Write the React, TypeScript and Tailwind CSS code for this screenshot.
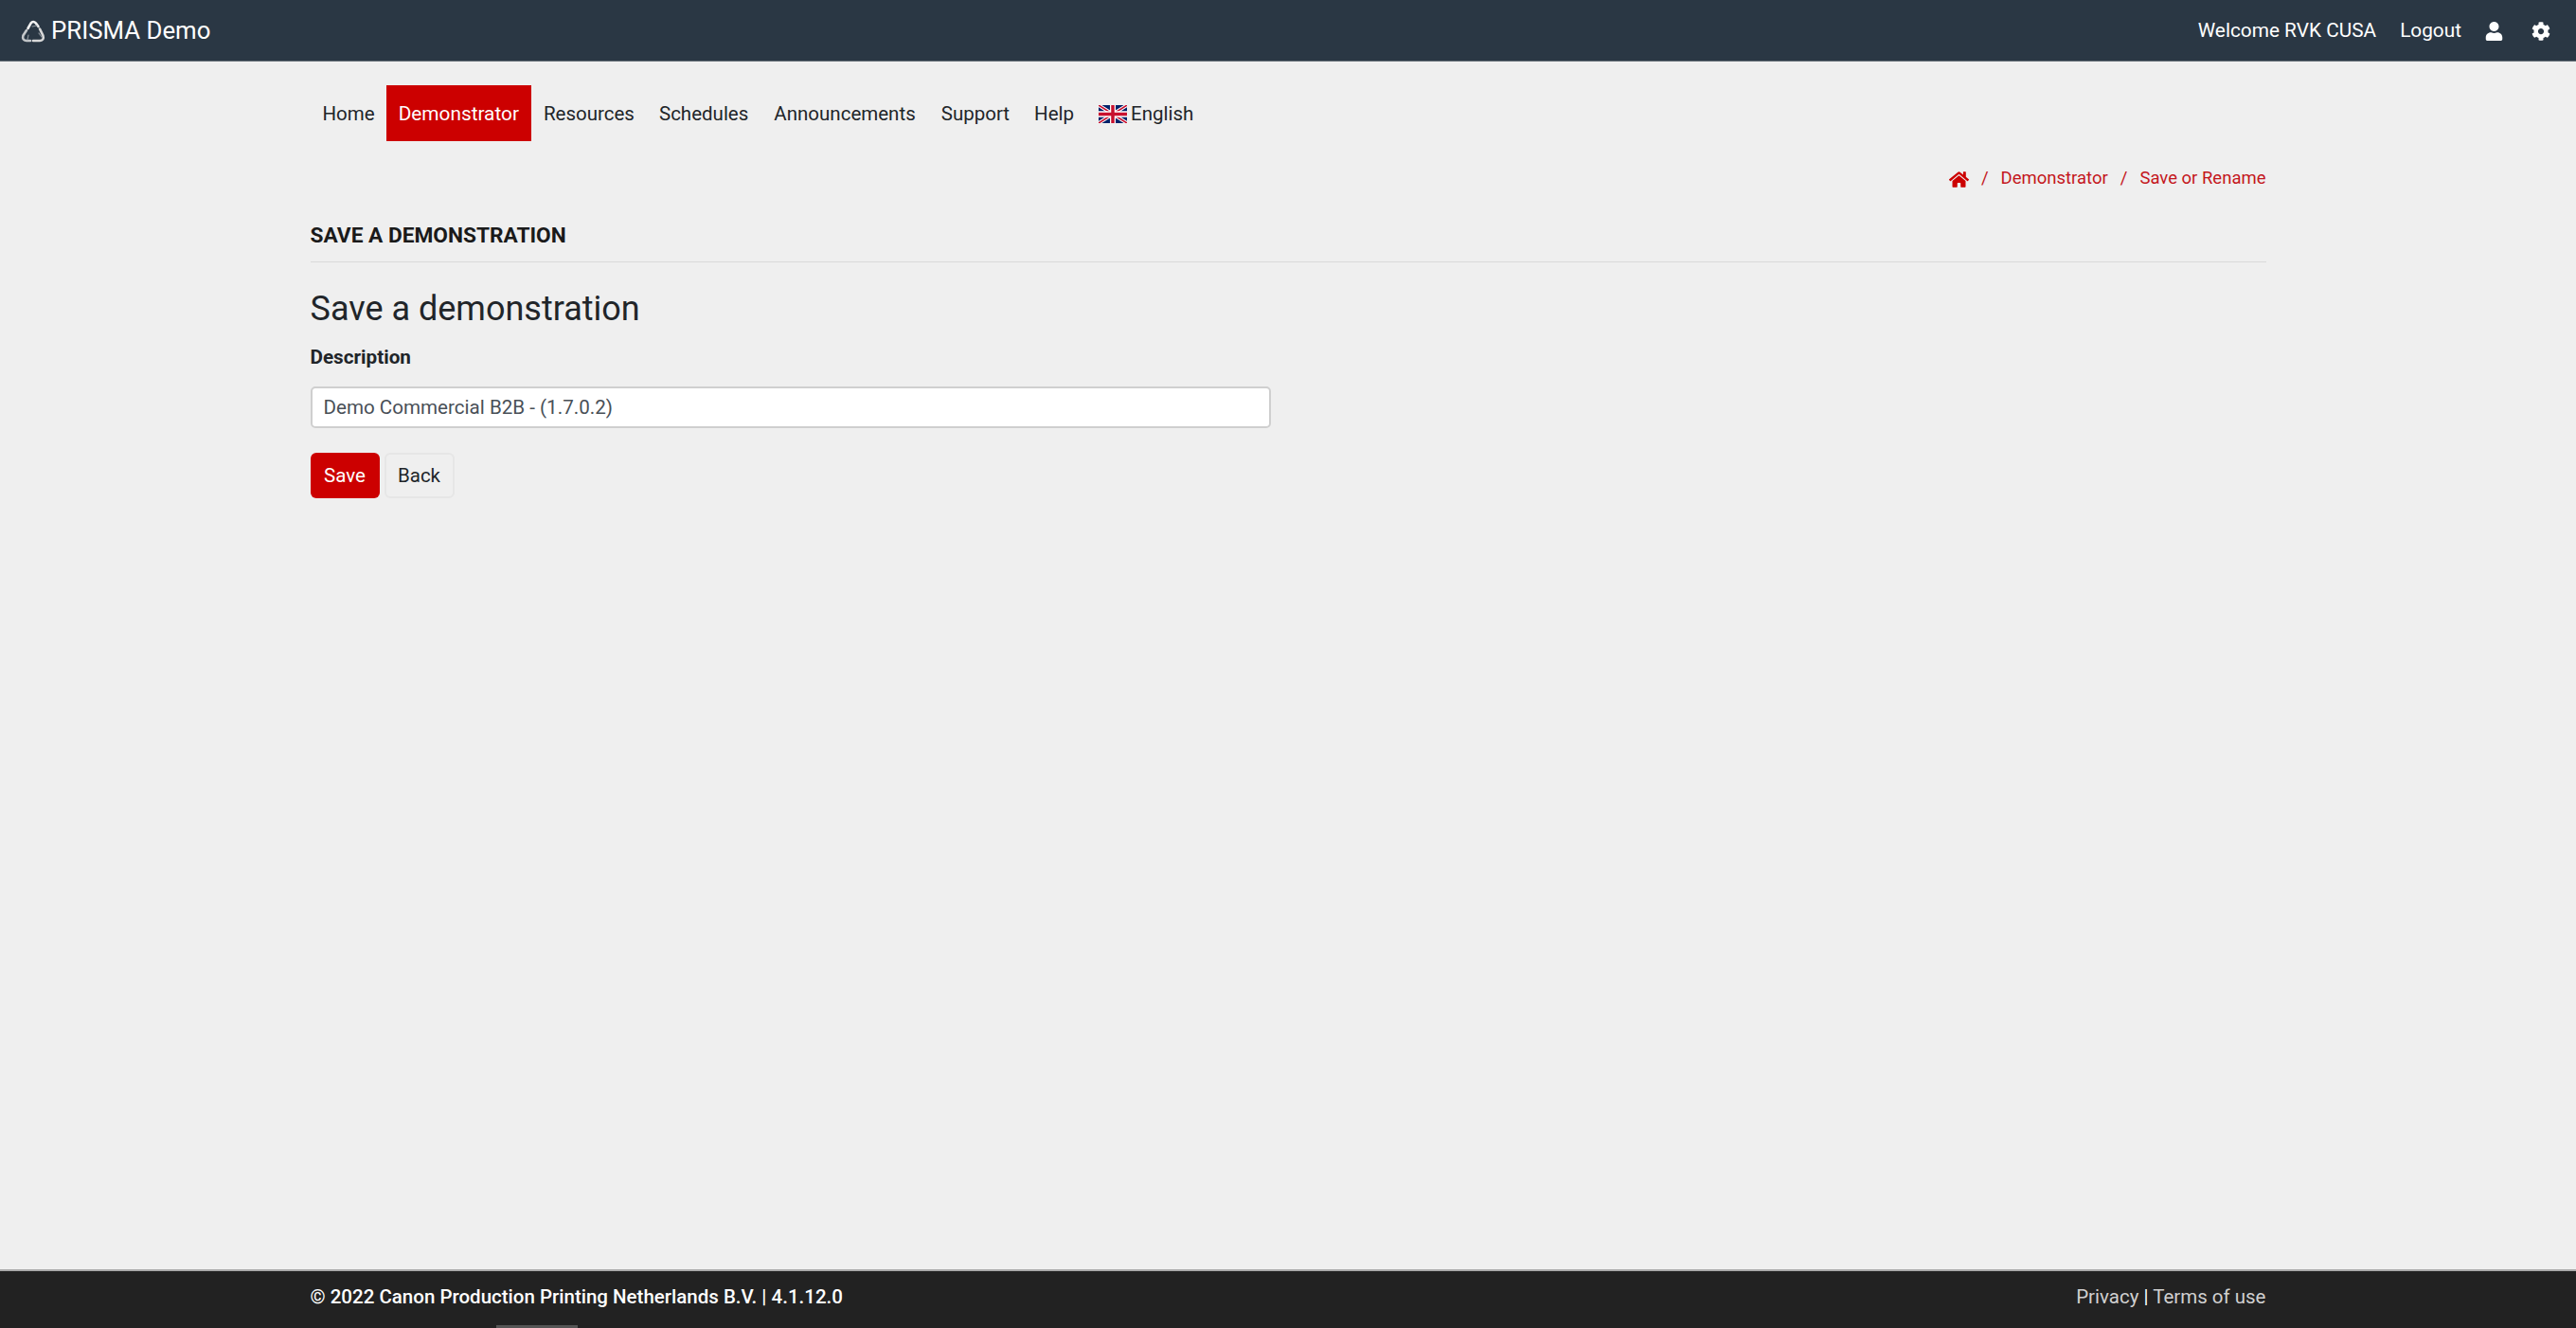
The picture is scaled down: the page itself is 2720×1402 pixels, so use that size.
import { FaHome, FaUser, FaCog } from "react-icons/fa";

function Logo() {
  return (
    <svg viewBox="0 0 26 26" className="w-[26px] h-[26px] mr-[6px]" fill="none" strokeLinecap="round">
      <path d="M7.5 10 L10.5 4.6 Q13 1.4 15.8 4.4 L18.5 8" stroke="#f2f2f2" strokeWidth="2.6" />
      <path d="M20 10.5 L23.4 17.5 Q25 22.5 20 23 L13 23" stroke="#d8d8d8" strokeWidth="2.6" />
      <path d="M10 23 L6 23 Q1 22.5 2.4 17.6 L6 12" stroke="#c4c7ca" strokeWidth="2.6" />
      <path d="M17 7 L12 8 M22 19 L19 15 M7 22 L8 17" stroke="#8d959c" strokeWidth="1.2" />
    </svg>
  );
}

function Flag() {
  return (
    <svg viewBox="0 0 60 36" className="w-[30px] h-[19px] mr-[4px]" preserveAspectRatio="none">
      <rect width="60" height="36" fill="#012169" />
      <path d="M0 0 L60 36 M60 0 L0 36" stroke="#fff" strokeWidth="7" />
      <path d="M0 0 L60 36 M60 0 L0 36" stroke="#C8102E" strokeWidth="3" />
      <path d="M30 0 V36 M0 18 H60" stroke="#fff" strokeWidth="12" />
      <path d="M30 0 V36 M0 18 H60" stroke="#C8102E" strokeWidth="7" />
    </svg>
  );
}

export default function App() {
  return (
    <div className="relative min-h-screen flex flex-col bg-[#efefef] font-['Roboto',sans-serif] text-[20.5px] text-[#212529]">
      <header className="h-[65px] bg-[#2a3744] border-b border-[#6c757d] flex items-center justify-between pt-[1px] pl-[22px] pr-[27px] text-white">
        <div className="flex items-center text-[25.8px]">
          <Logo />
          <span>PRISMA Demo</span>
        </div>
        <div className="flex items-center text-[20.8px]">
          <span>Welcome RVK CUSA</span>
          <span className="ml-[25px]">Logout</span>
          <FaUser className="ml-[24px] w-[21px] h-[20px]" />
          <FaCog className="ml-[29px] w-[20px] h-[20px]" />
        </div>
      </header>

      <main className="flex-1 w-[2065px] mx-auto">
        <nav className="flex items-center mt-[25px] h-[59px]">
          <a className="h-full flex items-center pt-[2px] pl-[13px] pr-[12px]">Home</a>
          <a className="h-full flex items-center pt-[2px] px-[13px] bg-[#cc0000] text-white text-[20.8px]">Demonstrator</a>
          <a className="h-full flex items-center pt-[2px] px-[13px]">Resources</a>
          <a className="h-full flex items-center pt-[2px] px-[13px]">Schedules</a>
          <a className="h-full flex items-center pt-[2px] px-[14px]">Announcements</a>
          <a className="h-full flex items-center pt-[2px] px-[13px]">Support</a>
          <a className="h-full flex items-center pt-[2px] px-[13px]">Help</a>
          <a className="h-full flex items-center pt-[2px] px-[13px]">
            <Flag />
            English
          </a>
        </nav>

        <div className="flex justify-end items-center mt-[28px] h-[24px] text-[18.5px] text-[#c4161c]">
          <FaHome className="w-[21px] h-[19px] text-[#cc0000]" />
          <span className="mx-[13px]">/</span>
          <span>Demonstrator</span>
          <span className="mx-[13px]">/</span>
          <span>Save or Rename</span>
        </div>

        <div className="mt-[31px] h-[45px] border-b border-[#d9d9d9] font-bold text-[#1a1a1a] text-[22.7px] uppercase">Save a demonstration</div>

        <h1 className="mt-[28px] text-[36px] leading-[42px] text-[#212529]">Save a demonstration</h1>
        <label className="block mt-[18px] font-bold text-[20.7px] leading-[24px] text-[#212529]">Description</label>
        <input
          readOnly
          value="Demo Commercial B2B - (1.7.0.2)"
          className="block mt-[19px] w-[1014px] h-[44px] px-[12px] bg-white border-2 border-[#cfcfcf] rounded-[5px] text-[20.6px] text-[#495057] outline-none"
        />
        <div className="flex gap-[5px] mt-[26px]">
          <button className="w-[73px] h-[48px] rounded-[6px] bg-[#cc0000] text-white">Save</button>
          <button className="w-[74px] h-[48px] rounded-[6px] border-2 border-[#e6e6e6] text-[#212529]">Back</button>
        </div>
      </main>

      <footer className="h-[62px] bg-[#222] border-t-2 border-[#aaa] text-white">
        <div className="w-[2065px] mx-auto h-[54px] flex items-center justify-between">
          <span className="font-medium">© 2022 Canon Production Printing Netherlands B.V. | 4.1.12.0</span>
          <span className="text-[#d0d0d0]">
            Privacy <span className="text-white">|</span> Terms of use
          </span>
        </div>
      </footer>
      <div className="absolute left-[524px] bottom-0 w-[86px] h-[3px] bg-[#555]" />
    </div>
  );
}
